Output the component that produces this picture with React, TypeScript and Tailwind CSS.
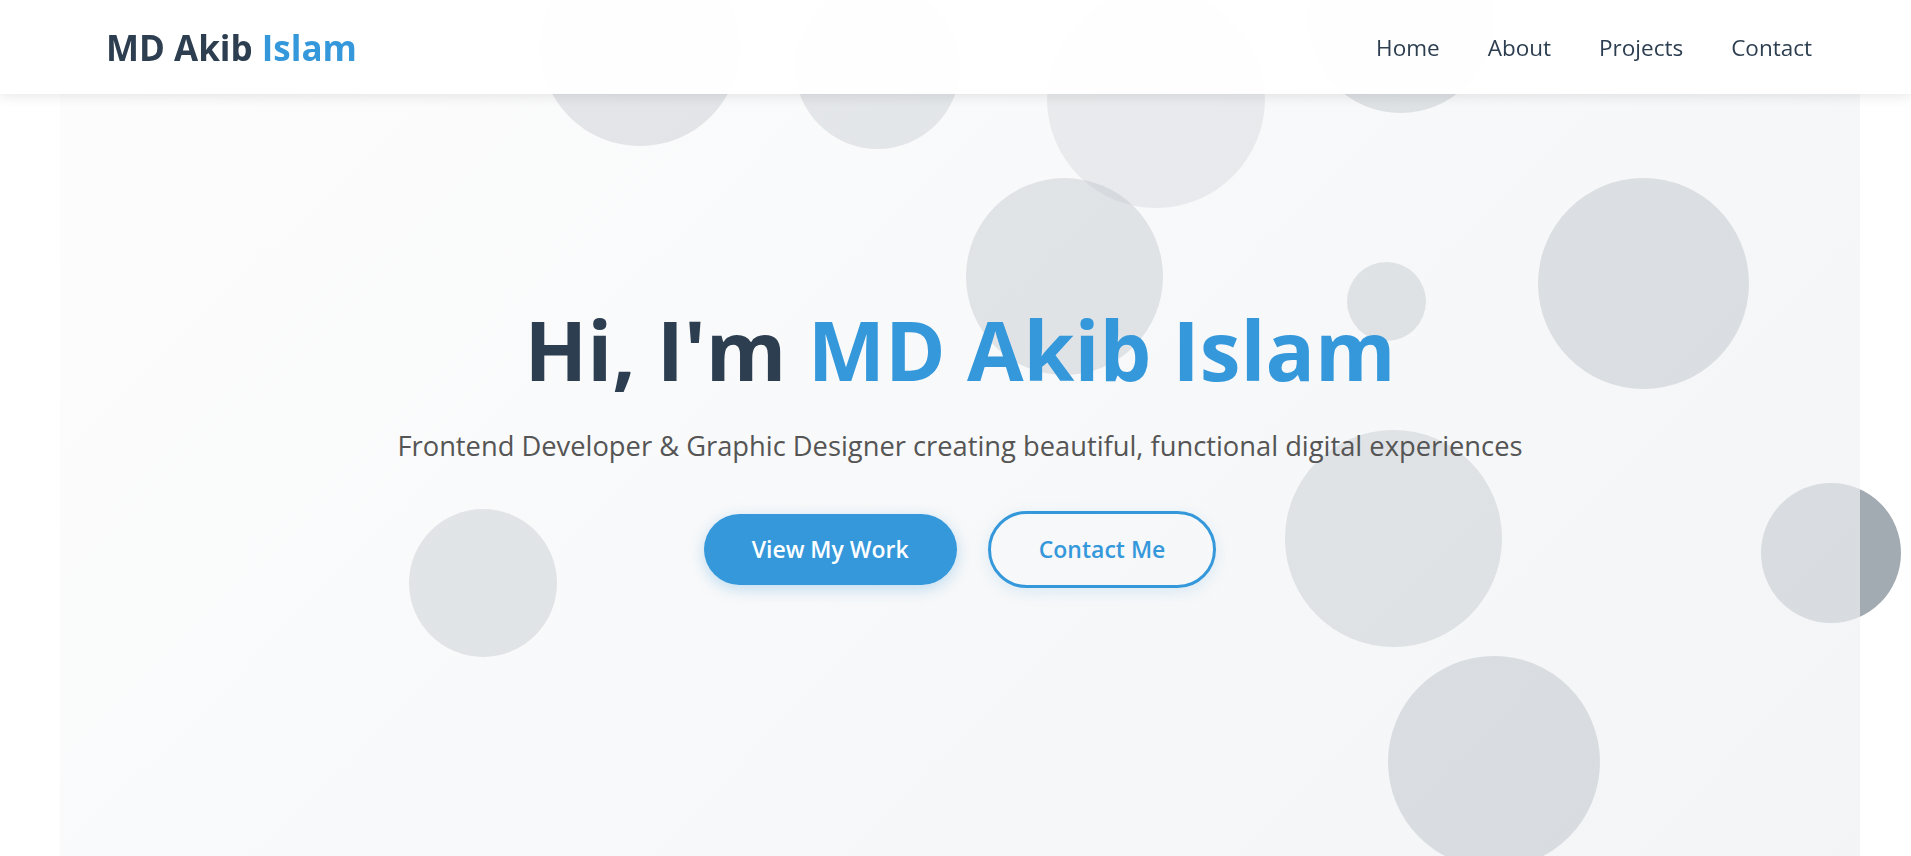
import React from "react";

export default function App() {
  return (
    <div className="relative h-[856px] w-full overflow-hidden bg-white font-['Open_Sans','Noto_Sans',sans-serif]">
      {/* floating decorative circles */}
      <div className="pointer-events-none absolute inset-0 z-0">
        <div className="absolute left-[540px] top-[-54px] h-[200px] w-[200px] rounded-full bg-[#2c3e50]/[0.38]" />
        <div className="absolute left-[795px] top-[-16px] h-[165px] w-[165px] rounded-full bg-[#2c3e50]/[0.35]" />
        <div className="absolute left-[1047px] top-[-10px] h-[218px] w-[218px] rounded-full bg-[#2c3e50]/[0.26]" />
        <div className="absolute left-[966px] top-[178px] h-[197px] w-[197px] rounded-full bg-[#2c3e50]/[0.38]" />
        <div className="absolute left-[1347px] top-[262px] h-[79px] w-[79px] rounded-full bg-[#2c3e50]/[0.38]" />
        <div className="absolute left-[409px] top-[509px] h-[148px] w-[148px] rounded-full bg-[#2c3e50]/[0.38]" />
        <div className="absolute left-[1285px] top-[430px] h-[217px] w-[217px] rounded-full bg-[#2c3e50]/[0.36]" />
        <div className="absolute left-[1388px] top-[656px] h-[212px] w-[212px] rounded-full bg-[#2c3e50]/[0.44]" />
        <div className="absolute left-[1538px] top-[178px] h-[211px] w-[211px] rounded-full bg-[#2c3e50]/[0.43]" />
        <div className="absolute left-[1761px] top-[483px] h-[140px] w-[140px] rounded-full bg-[#2c3e50]/[0.44]" />
        <div className="absolute left-[1308px] top-[-72px] h-[185px] w-[185px] rounded-full bg-[#2c3e50]/[0.4]" />
      </div>

      {/* header */}
      <header className="fixed inset-x-0 top-0 z-20 flex h-[94px] items-center justify-between bg-white/95 pl-[106px] pr-[99px] shadow-[0_2px_12px_rgba(0,0,0,0.1)]">
        <div className="text-[35px] font-bold leading-none text-[#2c3e50]">
          MD Akib <span className="text-[#3498db]">Islam</span>
        </div>
        <nav className="flex items-center gap-[48px] pt-[2px] text-[22.5px] text-[#2c3e50]">
          <a>Home</a>
          <a>About</a>
          <a>Projects</a>
          <a>Contact</a>
        </nav>
      </header>

      {/* hero */}
      <section className="relative z-10 ml-[60px] flex h-[856px] w-[1800px] flex-col items-center bg-[linear-gradient(135deg,rgba(252,252,253,0.7)_0%,rgba(238,240,242,0.7)_100%)] pt-[301px]">
        <h1 className="text-[82px] font-bold leading-[96px] text-[#2c3e50]">
          Hi, I'm <span className="text-[#3498db]">MD Akib Islam</span>
        </h1>
        <p className="mt-[29px] text-[27.3px] leading-[40px] text-[#555]">
          Frontend Developer &amp; Graphic Designer creating beautiful, functional digital experiences
        </p>
        <div className="mt-[45px] flex items-center gap-[31px]">
          <button className="flex h-[71px] items-center rounded-full bg-[#3498db] px-[48px] text-[23px] font-semibold text-white shadow-[0_4px_15px_rgba(52,152,219,0.3)]">
            View My Work
          </button>
          <button className="flex h-[77px] items-center rounded-full border-[3px] border-[#3498db] bg-transparent px-[48px] text-[23px] font-semibold text-[#3498db] shadow-[0_4px_15px_rgba(52,152,219,0.15)]">
            Contact Me
          </button>
        </div>
      </section>
    </div>
  );
}
